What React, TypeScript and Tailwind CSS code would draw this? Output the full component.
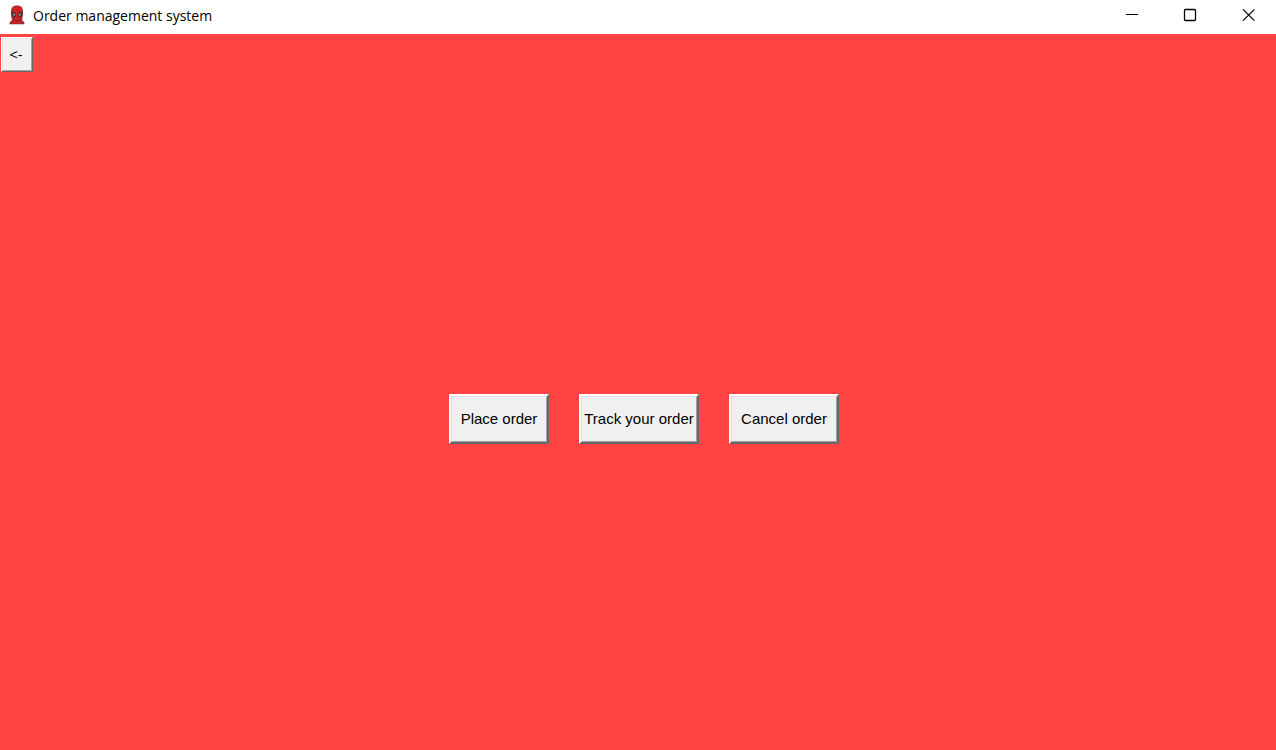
import type { ReactNode } from "react";

function MaskIcon() {
  return (
    <svg width="18" height="22" viewBox="0 0 18 22" aria-hidden="true">
      <path
        d="M3 7C3 2.500 5 .5 9 .5s6 2 6 6.500c0 3-.2 5-.8 6.500v2l1.600 1.200c.5.400.7 1.200.7 2.600h-15c0-1.400.2-2.200.7-2.600l1.600-1.200v-2C3.200 12 3 10 3 7z"
        fill="#8c2a2e"
      />
      <path
        d="M4 6.500C4 2.800 5.800 1 9 1s5 1.800 5 5.500c0 3-.1 5-.7 6.600-.8 1.400-2.300 2.200-4.300 2.200s-3.500-.8-4.300-2.200C4.100 11.500 4 9.500 4 6.500z"
        fill="#cf2228"
      />
      <path d="M5.500 15.800c1 .5 2.200.7 3.500.7s2.500-.2 3.500-.7l2.500 1.800.3 1.200H2.700l.3-1.200z" fill="#c9252b" />
      <path d="M3.600 6.600C6 6.800 7.800 8.300 8 10c0 1.500-1 2.600-2.200 2.400C4.300 11.700 3.600 9.400 3.600 6.600z" fill="#3a3033" />
      <path d="M14.400 6.600c-2.400.2-4.200 1.700-4.400 3.400 0 1.500 1 2.600 2.200 2.400 1.500-.7 2.200-3 2.200-5.800z" fill="#3a3033" />
      <path d="M4.900 8.300l2.500 1.700-1.500.8z" fill="#d5cfd0" />
      <path d="M13.100 8.300L10.600 10l1.500.8z" fill="#d5cfd0" />
    </svg>
  );
}

function WindowButton({ label, children }: { label: string; children: ReactNode }) {
  return (
    <button
      type="button"
      aria-label={label}
      className="flex h-full w-14 items-center justify-center pb-1 hover:bg-gray-200"
    >
      <svg width="14" height="14" viewBox="0 0 14 14" fill="none" stroke="#000000" aria-hidden="true">
        {children}
      </svg>
    </button>
  );
}

function OrderButton({ width, children }: { width: string; children: ReactNode }) {
  return (
    <button
      type="button"
      className={`${width} h-[50px] border-2 border-t-white border-l-white border-r-[#696969] border-b-[#696969] bg-[#f0f0f0] text-[15px] whitespace-nowrap shadow-[inset_1px_1px_0_#e3e3e3,inset_-1px_-1px_0_#a0a0a0]`}
    >
      {children}
    </button>
  );
}

export default function App() {
  return (
    <div className="flex min-h-screen flex-col bg-[#ff4343] font-['Liberation_Sans',Arial,sans-serif] text-black">
      <header className="flex h-[34px] items-center justify-between bg-white">
        <div className="flex items-center gap-[7px] pb-0.5 pl-2">
          <MaskIcon />
          <h1 className="font-['Open_Sans','Noto_Sans',sans-serif] text-[14px] leading-5">Order management system</h1>
        </div>
        <div className="flex h-full gap-0.5">
          <WindowButton label="Minimize">
            <path d="M1 6.500h12" />
          </WindowButton>
          <WindowButton label="Maximize">
            <rect x="1.500" y="1.500" width="11" height="11" rx="1" strokeWidth="1.300" />
          </WindowButton>
          <WindowButton label="Close">
            <path d="M2 1.300l11.400 11.400M13.400 1.300L2 12.700" strokeWidth="1.200" />
          </WindowButton>
        </div>
      </header>
      <nav className="px-px pt-[3px]">
        <button
          type="button"
          aria-label="Back"
          className="block h-[35px] w-8 border border-t-white border-l-white border-r-[#696969] border-b-[#696969] bg-[#f0f0f0] pr-0.5 font-['Open_Sans','Noto_Sans',sans-serif] text-[15px] shadow-[inset_1px_1px_0_#e3e3e3,inset_-1px_-1px_0_#a0a0a0]"
        >
          &lt;-
        </button>
      </nav>
      <main className="flex flex-1 items-center justify-center gap-[30px] pt-4 pl-3">
        <OrderButton width="w-[100px]">Place order</OrderButton>
        <OrderButton width="w-[120px]">Track your order</OrderButton>
        <OrderButton width="w-[110px]">Cancel order</OrderButton>
      </main>
    </div>
  );
}
